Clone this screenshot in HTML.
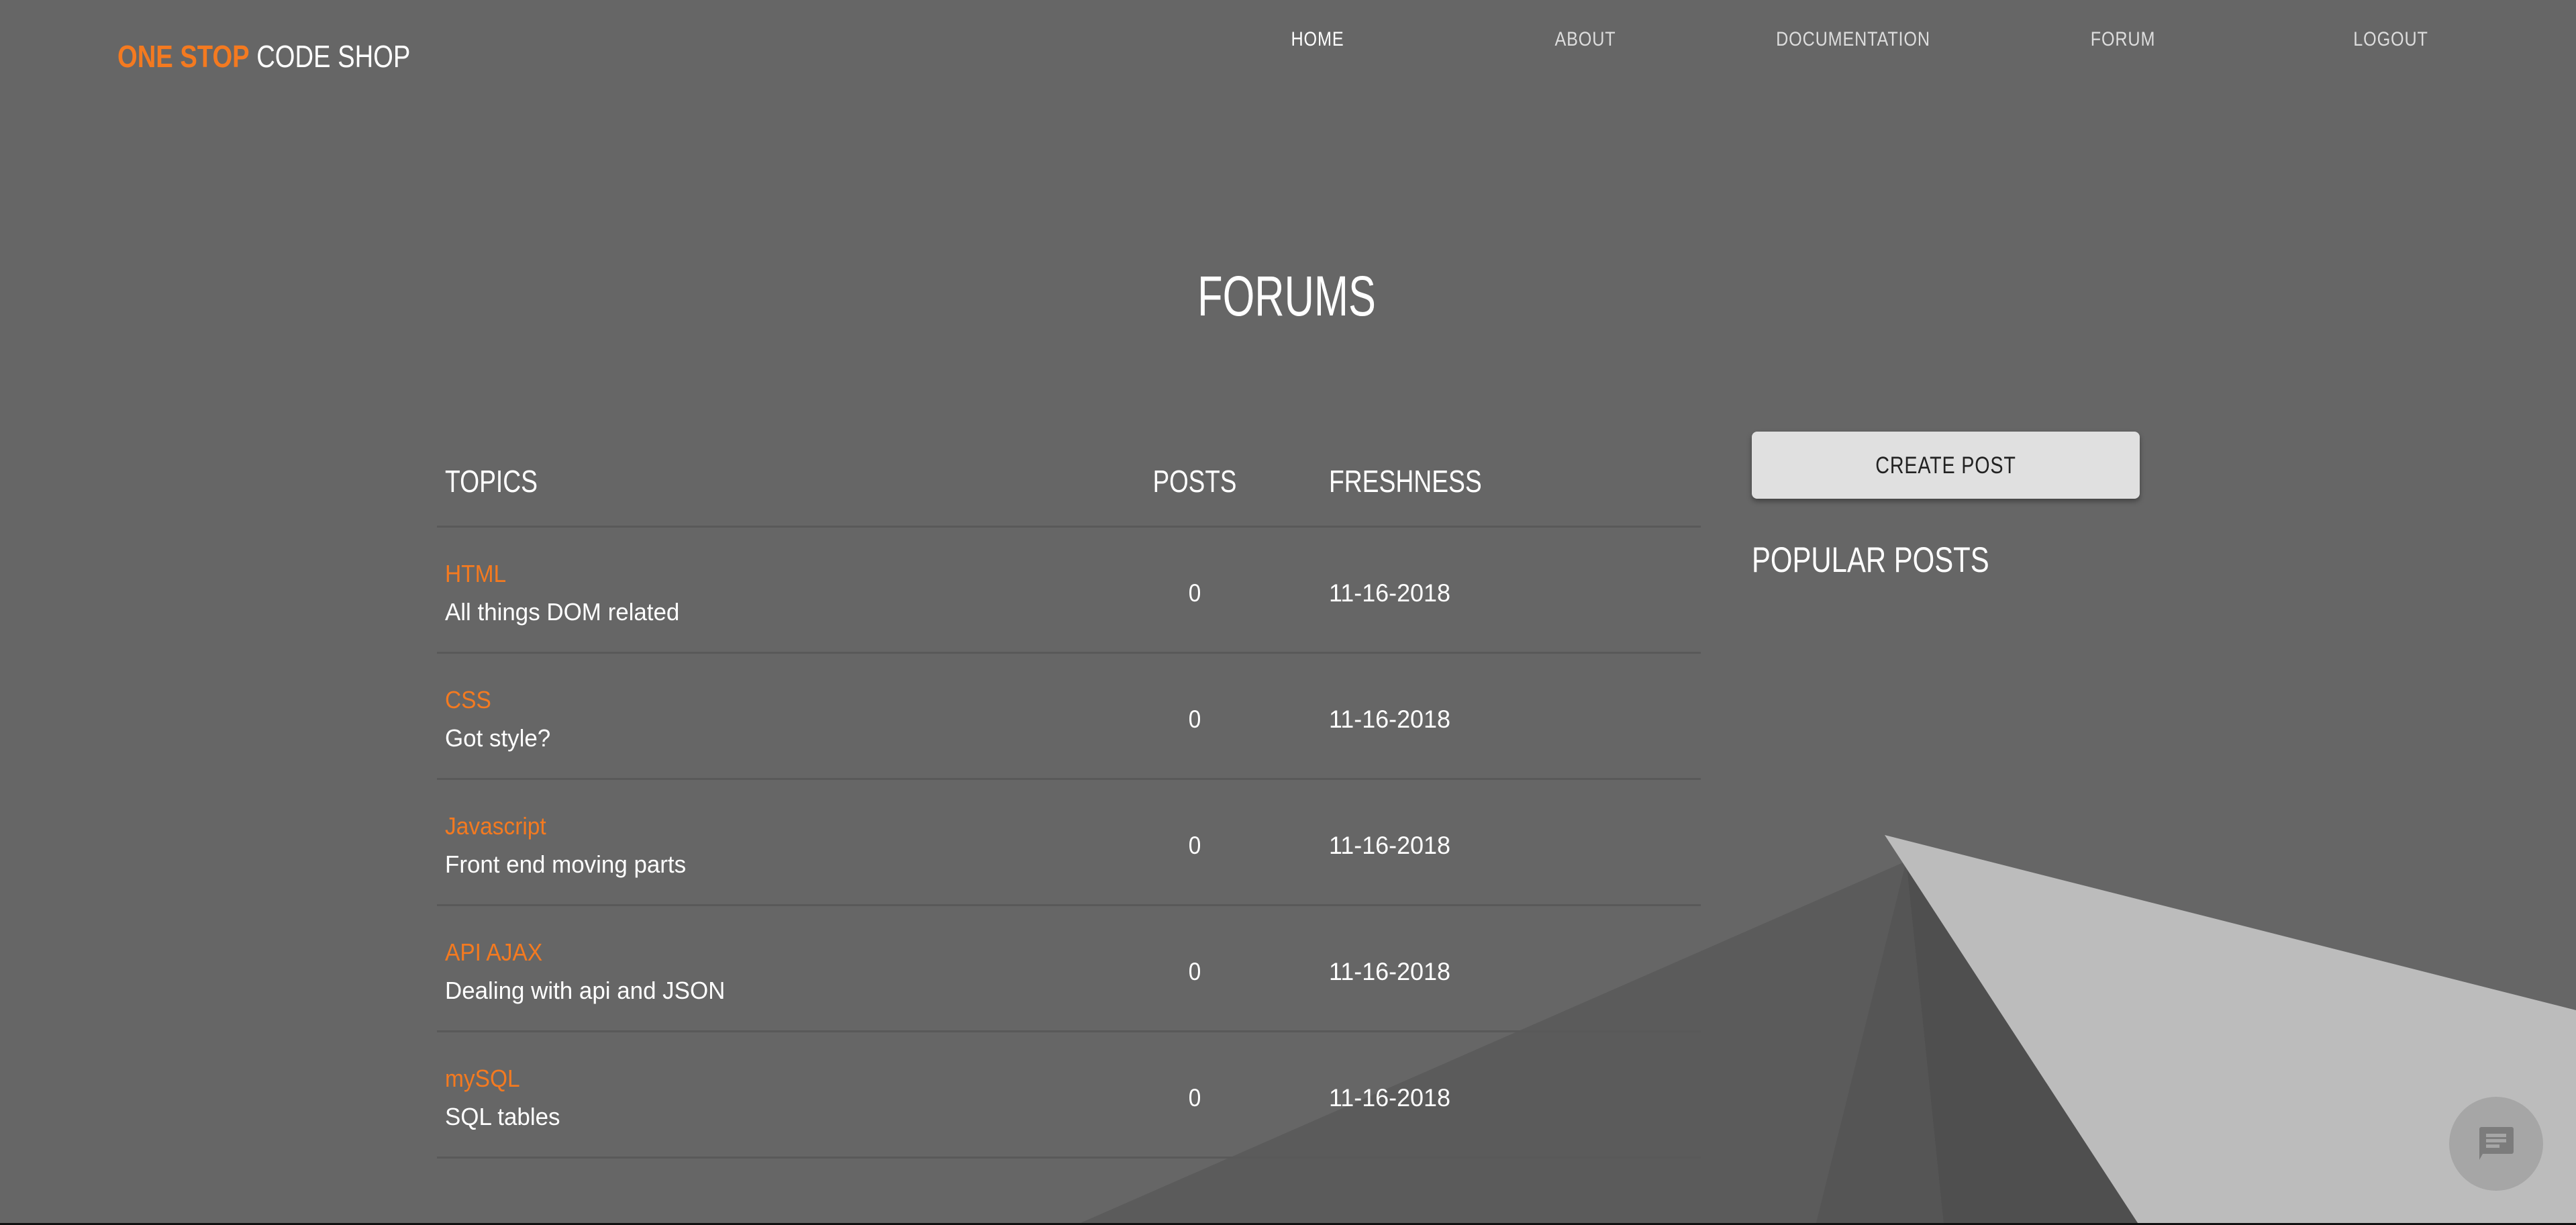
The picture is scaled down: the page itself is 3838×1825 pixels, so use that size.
<!DOCTYPE html>
<html><head><meta charset="utf-8"><style>
html,body{margin:0;padding:0;}
body{width:3838px;height:1825px;background:#666;position:relative;overflow:hidden;font-family:"Liberation Sans",sans-serif;color:#fff;}
.t{position:absolute;line-height:1;white-space:nowrap;transform-origin:left top;}
.c{transform-origin:center top;}
.nav{font-size:30px;color:#ddd;top:44px;letter-spacing:1px;transform:translateX(-50%) scaleX(0.84)}
.line{position:absolute;left:651px;width:1883px;height:3px;background:#595959;}
.title{font-size:36px;color:#f47a20;transform:scaleX(0.93)}
.desc{font-size:36px;color:#fff;transform:scaleX(0.97)}
.num{font-size:37px;transform:scaleX(0.97)}
.num.c{transform:translateX(-50%) scaleX(0.9)}
.hd{font-size:46px;transform:scaleX(0.81)}
</style></head><body>
<svg width="3838" height="1825" style="position:absolute;left:0;top:0">
<polygon points="2840,1283 1603,1825 2705,1825" fill="#5b5b5b"/>
<polygon points="2840,1283 2705,1825 2896,1825" fill="#555555"/>
<polygon points="2840,1283 2896,1825 3187,1825" fill="#4f4f4f"/>
<polygon points="2808,1244 3838,1505 3838,1825 3187,1825" fill="#bcbcbc"/>
<rect x="0" y="1822" width="3838" height="3" fill="#111"/>
<circle cx="3719" cy="1704" r="70" fill="#a6a6a6"/>
<path d="M3697,1679 h45 a3,3 0 0 1 3,3 v34 a3,3 0 0 1 -3,3 h-43 l-5,9 v-46 a3,3 0 0 1 3,-3z" fill="#7c7c7c"/>
<rect x="3704" y="1689" width="30" height="5" fill="#a6a6a6"/>
<rect x="3704" y="1697" width="30" height="5" fill="#a6a6a6"/>
<rect x="3704" y="1705" width="20" height="5" fill="#a6a6a6"/>
</svg>
<div class="t" style="left:175px;top:61px;font-size:46px;transform:scaleX(0.83)"><b style="color:#f47a20">ONE STOP</b> CODE SHOP</div>
<div class="t nav c" style="left:1963px;color:#fff">HOME</div>
<div class="t nav c" style="left:2362px">ABOUT</div>
<div class="t nav c" style="left:2761px">DOCUMENTATION</div>
<div class="t nav c" style="left:3163px">FORUM</div>
<div class="t nav c" style="left:3562px">LOGOUT</div>
<div class="t c" style="left:1917px;top:399px;font-size:84px;transform:translateX(-50%) scaleX(0.73)">FORUMS</div>
<div class="t hd" style="left:663px;top:694px">TOPICS</div>
<div class="t hd c" style="left:1780px;top:694px;transform:translateX(-50%) scaleX(0.8)">POSTS</div>
<div class="t hd" style="left:1980px;top:694px">FRESHNESS</div>
<div class="line" style="top:783px"></div>
<div class="line" style="top:971px"></div>
<div class="line" style="top:1159px"></div>
<div class="line" style="top:1347px"></div>
<div class="line" style="top:1535px"></div>
<div class="line" style="top:1723px"></div>

<div class="t title" style="left:663px;top:837px">HTML</div>
<div class="t desc" style="left:663px;top:894px">All things DOM related</div>
<div class="t num c" style="left:1780px;top:865px">0</div>
<div class="t num" style="left:1980px;top:865px">11-16-2018</div>

<div class="t title" style="left:663px;top:1025px">CSS</div>
<div class="t desc" style="left:663px;top:1082px">Got style?</div>
<div class="t num c" style="left:1780px;top:1053px">0</div>
<div class="t num" style="left:1980px;top:1053px">11-16-2018</div>

<div class="t title" style="left:663px;top:1213px">Javascript</div>
<div class="t desc" style="left:663px;top:1270px">Front end moving parts</div>
<div class="t num c" style="left:1780px;top:1241px">0</div>
<div class="t num" style="left:1980px;top:1241px">11-16-2018</div>

<div class="t title" style="left:663px;top:1401px">API AJAX</div>
<div class="t desc" style="left:663px;top:1458px">Dealing with api and JSON</div>
<div class="t num c" style="left:1780px;top:1429px">0</div>
<div class="t num" style="left:1980px;top:1429px">11-16-2018</div>

<div class="t title" style="left:663px;top:1589px">mySQL</div>
<div class="t desc" style="left:663px;top:1646px">SQL tables</div>
<div class="t num c" style="left:1780px;top:1617px">0</div>
<div class="t num" style="left:1980px;top:1617px">11-16-2018</div>

<div style="position:absolute;left:2610px;top:643px;width:578px;height:100px;background:#e0e0e0;border-radius:8px;box-shadow:0 4px 8px rgba(0,0,0,0.35);"></div>
<div class="t c" style="left:2899px;top:676px;font-size:35px;color:#222;letter-spacing:1px;transform:translateX(-50%) scaleX(0.82)">CREATE POST</div>
<div class="t" style="left:2610px;top:808px;font-size:53px;transform:scaleX(0.79)">POPULAR POSTS</div>
</body></html>
